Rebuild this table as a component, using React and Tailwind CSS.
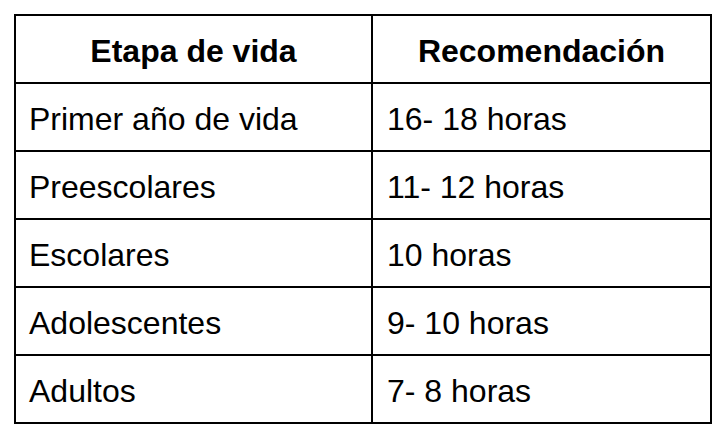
export default function App() {
  const rows = [
    ['Primer año de vida', '16- 18 horas'],
    ['Preescolares', '11- 12 horas'],
    ['Escolares', '10 horas'],
    ['Adolescentes', '9- 10 horas'],
    ['Adultos', '7- 8 horas'],
  ];

  return (
    <div className="w-[724px] h-[430px] bg-white pt-[14px] pl-[14px]" style={{ fontFamily: '"Liberation Sans", Arial, sans-serif' }}>
      <div className="w-[698px] border-2 border-black text-black text-[32px]">
        {/* Header */}
        <div className="grid grid-cols-[357px_1fr] h-[66px]">
          <div className="flex items-center justify-center pt-[4px] font-bold border-r-2 border-black">Etapa de vida</div>
          <div className="flex items-center justify-center pt-[4px] font-bold">Recomendación</div>
        </div>
        {rows.map(([etapa, rec]) => (
          <div key={etapa} className="grid grid-cols-[357px_1fr] h-[68px] border-t-2 border-black">
            <div className="flex items-center pl-[13px] pt-[3px] border-r-2 border-black">{etapa}</div>
            <div className="flex items-center pl-[14px] pt-[3px]">{rec}</div>
          </div>
        ))}
      </div>
    </div>
  );
}
